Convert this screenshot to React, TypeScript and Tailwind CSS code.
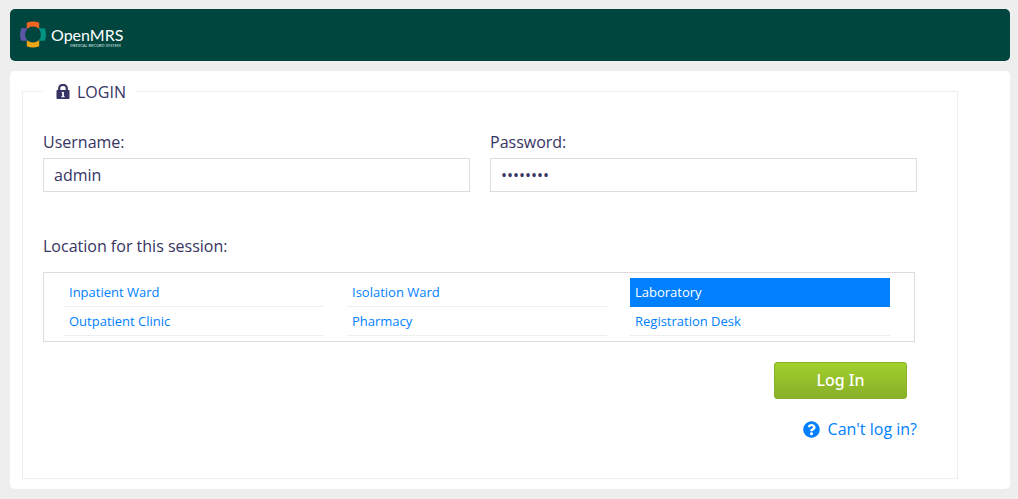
import { useState } from "react";
import { FaQuestionCircle } from "react-icons/fa";

const locations = [
  "Inpatient Ward",
  "Isolation Ward",
  "Laboratory",
  "Outpatient Clinic",
  "Pharmacy",
  "Registration Desk",
];

function Logo() {
  return (
    <a href="#home" aria-label="OpenMRS" className="block">
      <svg viewBox="0 0 106 30" className="block h-[30px] w-[106px]">
        <path d="M6.8 2.8Q13 .2 19.2 2.8V9H6.8Z" fill="#f26522" />
        <path d="M6.8 26.2Q13 28.8 19.2 26.2V20H6.8Z" fill="#eea616" />
        <path d="M1.3 8.3Q-1.3 14.5 1.3 20.7H7.5V8.3Z" fill="#5b57a6" />
        <path d="M24.7 8.3Q27.3 14.5 24.7 20.7H18.5V8.3Z" fill="#009384" />
        <circle cx="13" cy="14.5" r="8" fill="#00463f" />
        <text x="31" y="21" fill="#fff" fontSize="16" fontFamily="Lato, sans-serif">
          OpenMRS
        </text>
        <text x="50" y="27" fill="#dce8e6" fontSize="4" fontFamily="Lato, sans-serif">
          MEDICAL RECORD SYSTEM
        </text>
      </svg>
    </a>
  );
}

function LockIcon() {
  return (
    <svg viewBox="0 0 14 16" className="h-4 w-3.5" aria-hidden="true">
      <path d="M3.2 7V4.2a3.8 3.4 0 0 1 7.6 0V7" fill="none" stroke="currentColor" strokeWidth="2.2" />
      <rect x="0.5" y="6" width="13" height="9" rx="0.8" fill="currentColor" />
      <path d="M5.7 8h2.2v4.3h.8v1H5.3v-1H6.2V9h-.5z" fill="#fff" />
    </svg>
  );
}

export default function App() {
  const [selected, setSelected] = useState("Laboratory");
  const field =
    "h-[34px] w-full border border-[#dddddd] bg-white px-2.5 text-base text-[#363463] outline-none focus:border-[#007fff]";

  return (
    <div className="min-h-screen bg-[#eeeeee] py-[9px] pr-2 pl-2.5 font-['Open_Sans','Noto_Sans',sans-serif] text-base text-[#363463]">
      <header className="flex h-[52px] items-center rounded-[5px] bg-[#00463f] px-2.5">
        <Logo />
      </header>
      <main className="mt-2.5 rounded-[5px] bg-white pt-[9px] pr-[52px] pb-2.5 pl-3">
        <form onSubmit={(e) => e.preventDefault()}>
          <fieldset className="border border-[#eeeeee] px-5 pb-[37px]">
            <legend className="flex h-[23px] items-center gap-1 px-2.5">
              <span className="flex w-5 justify-center">
                <LockIcon />
              </span>
              LOGIN
            </legend>
            <div className="pt-[27px] pr-5">
              <div className="grid grid-cols-2 gap-5">
                <div>
                  <label htmlFor="username" className="mb-1 block leading-6">
                    Username:
                  </label>
                  <input id="username" type="text" defaultValue="admin" className={field} />
                </div>
                <div>
                  <label htmlFor="password" className="mb-1 block leading-6">
                    Password:
                  </label>
                  <input id="password" type="password" defaultValue="Admin123" className={field} />
                </div>
              </div>

              <p id="location-label" className="mt-[42px] leading-6">
                Location for this session:
              </p>
              <ul
                aria-labelledby="location-label"
                className="mt-3.5 mr-0.5 grid grid-cols-3 gap-x-[23px] border border-[#dddddd] py-[5px] pr-6 pl-5 text-[13px]"
              >
                {locations.map((name) => (
                  <li key={name}>
                    <button
                      type="button"
                      aria-pressed={selected === name}
                      onClick={() => setSelected(name)}
                      className={
                        selected === name
                          ? "block h-[29px] w-full border-b border-[#007fff] bg-[#007fff] px-[5px] pt-0.5 text-left text-white"
                          : "block h-[29px] w-full border-b border-[#eeeeee] px-[5px] pt-0.5 text-left text-[#007fff]"
                      }
                    >
                      {name}
                    </button>
                  </li>
                ))}
              </ul>

              <div className="mt-5 flex flex-col items-end">
                <button
                  type="submit"
                  className="mr-2.5 h-[37px] w-[133px] rounded-[3px] border border-[#88af28] bg-linear-to-b from-[#a1d02e] to-[#88af28] pb-0.5 font-['Noto_Sans','Open_Sans',sans-serif] font-medium text-white"
                >
                  Log In
                </button>
                <a href="#help" className="mt-[18px] flex items-center gap-2 leading-6 text-[#007fff]">
                  <FaQuestionCircle className="size-[17px]" aria-hidden="true" />
                  Can't log in?
                </a>
              </div>
            </div>
          </fieldset>
        </form>
      </main>
    </div>
  );
}
